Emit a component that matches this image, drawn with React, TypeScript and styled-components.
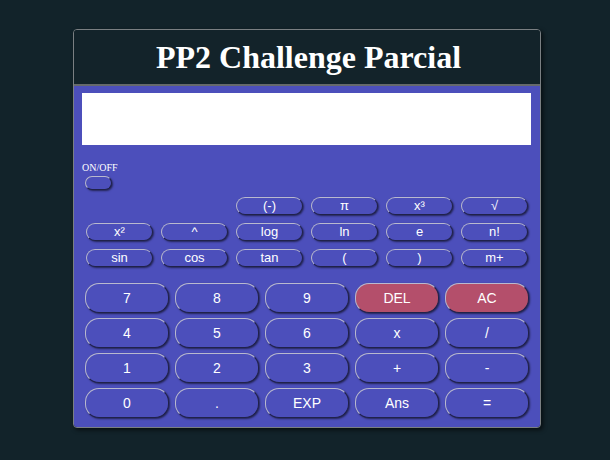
import React from "react";
import styled, { createGlobalStyle, css } from "styled-components";

const Global = createGlobalStyle`
  html, body {
    margin: 0;
    padding: 0;
    background: #12232a;
  }
  body {
    font-family: "Liberation Sans", Arial, sans-serif;
  }
`;

const Page = styled.div`
  padding: 29px 0 0 73px;
  min-height: 460px;
  box-sizing: border-box;
`;

const Calculator = styled.div`
  width: 468px;
  box-sizing: border-box;
  border: 1px solid #7a7f82;
  border-radius: 4px;
  overflow: hidden;
  box-shadow: 2px 2px 4px rgba(0, 0, 0, 0.6);
`;

const Header = styled.header`
  height: 56px;
  box-sizing: border-box;
  background: #13232a;
  border-bottom: 2px solid #66696b;
  display: flex;
  align-items: center;
  justify-content: center;
`;

const Title = styled.h1`
  margin: 0;
  font-family: "Liberation Serif", "Times New Roman", serif;
  font-weight: bold;
  font-size: 32px;
  color: #ffffff;
  padding-left: 3px;
`;

const Body = styled.div`
  background: #4c4fbb;
  padding: 7px 9px 9px 8px;
  display: flex;
  flex-direction: column;
`;

const Display = styled.div`
  height: 52px;
  background: #ffffff;
`;

const PowerLabel = styled.div`
  margin-top: 17px;
  font-family: "Liberation Serif", "Times New Roman", serif;
  font-size: 10px;
  line-height: 11px;
  color: #ffffff;
`;

const PowerRow = styled.div`
  display: flex;
  margin-top: 3px;
  padding-left: 3px;
`;

const bevel = css`
  border: 1px solid;
  border-color: #b9b9cf #20224a #20224a #b9b9cf;
  box-shadow: 1px 1px 2px rgba(0, 0, 0, 0.55);
  color: #ffffff;
  font-family: "Liberation Sans", Arial, sans-serif;
  padding: 0;
  cursor: pointer;
  box-sizing: border-box;
`;

const Toggle = styled.button`
  ${bevel};
  width: 27px;
  height: 14px;
  border-radius: 7px;
  background: #4c4fbb;
`;

const SciGrid = styled.div`
  margin: 7px 0 0 4px;
  display: grid;
  grid-template-columns: repeat(6, 67px);
  grid-auto-rows: 18px;
  column-gap: 8px;
  row-gap: 8px;
`;

const SciKey = styled.button<{ $col?: number }>`
  ${bevel};
  border-radius: 9px;
  background: #4c4fbb;
  font-size: 13px;
  line-height: 16px;
  ${(p) => (p.$col ? `grid-column: ${p.$col};` : "")}
`;

const MainGrid = styled.div`
  margin: 16px 0 0 3px;
  display: grid;
  grid-template-columns: repeat(5, 84px);
  grid-auto-rows: 30px;
  column-gap: 6px;
  row-gap: 5px;
`;

const Key = styled.button<{ $danger?: boolean }>`
  ${bevel};
  border-radius: 14px;
  background: ${(p) => (p.$danger ? "#b44f6b" : "#4c4fbb")};
  font-size: 14px;
  line-height: 16px;
`;

const sciTop = ["(-)", "π", "x³", "√"];
const sciRows = [
  ["x²", "^", "log", "ln", "e", "n!"],
  ["sin", "cos", "tan", "(", ")", "m+"],
];
const mainKeys = [
  "7", "8", "9", "DEL", "AC",
  "4", "5", "6", "x", "/",
  "1", "2", "3", "+", "-",
  "0", ".", "EXP", "Ans", "=",
];

export default function App() {
  return (
    <>
      <Global />
      <Page>
        <Calculator>
          <Header>
            <Title>PP2 Challenge Parcial</Title>
          </Header>
          <Body>
            <Display />
            <PowerLabel>ON/OFF</PowerLabel>
            <PowerRow>
              <Toggle aria-label="ON/OFF" />
            </PowerRow>
            <SciGrid>
              {sciTop.map((k, i) => (
                <SciKey key={k} $col={i === 0 ? 3 : undefined}>
                  {k}
                </SciKey>
              ))}
              {sciRows.flat().map((k) => (
                <SciKey key={k}>{k}</SciKey>
              ))}
            </SciGrid>
            <MainGrid>
              {mainKeys.map((k) => (
                <Key key={k} $danger={k === "DEL" || k === "AC"}>
                  {k}
                </Key>
              ))}
            </MainGrid>
          </Body>
        </Calculator>
      </Page>
    </>
  );
}
